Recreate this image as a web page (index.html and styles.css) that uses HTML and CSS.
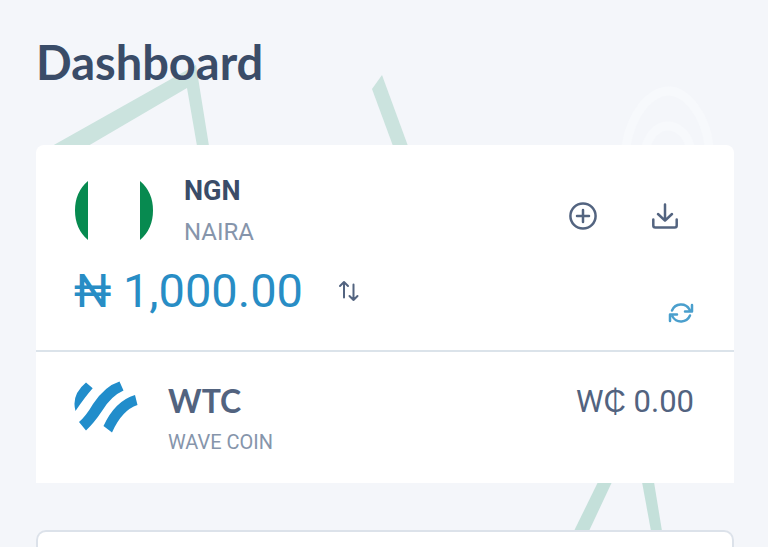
FILE: index.html
```html
<!DOCTYPE html>
<html lang="en">
<head>
<meta charset="utf-8">
<meta name="viewport" content="width=device-width, initial-scale=1">
<title>Dashboard</title>
<link rel="stylesheet" href="styles.css">
</head>
<body>
<svg class="backdrop" width="768" height="547" viewBox="0 0 768 547" aria-hidden="true">
  <path class="ribbon" d="M52 146 196 65 209 146H197L187 88 88 146Z"/>
  <path class="ribbon" d="M372 89 382 75 408 146H393Z"/>
  <path class="ribbon ribbon-low" d="M598 482H612L589 531H574Z"/>
  <path class="ribbon ribbon-low" d="M642 482H654L662 531H651Z"/>
  <path class="wave" d="M626 146C632 112 650 92 668 91S706 116 709 146M646 146C652 130 660 126 668 126S686 132 690 146"/>
</svg>
<main class="page">
  <h1 class="title">Dashboard</h1>
  <section class="wallets">
    <article class="wallet">
      <div class="row">
        <svg class="flag" width="80" height="60" viewBox="0 0 80 60" role="img" aria-label="Nigeria">
          <path fill="#078a50" d="M14 0V59Q1 48 1 29.500T14 0ZM66 0V59Q79 48 79 29.500T66 0Z"/>
        </svg>
        <div class="names">
          <h2 class="code">NGN</h2>
          <p class="name">NAIRA</p>
        </div>
        <div class="actions">
          <button class="icon-button" type="button" aria-label="Add money">
            <svg width="28" height="28" viewBox="0 0 28 28"><circle cx="14" cy="14" r="12.6"/><path d="M14 8v12M8 14h12"/></svg>
          </button>
          <button class="icon-button" type="button" aria-label="Withdraw">
            <svg width="28" height="28" viewBox="0 0 28 28"><path d="M14 2.500v16M7 12l7 6.700 7-6.700M2.300 17.500v6a2 2 0 0 0 2 2h19.400a2 2 0 0 0 2-2v-6"/></svg>
          </button>
        </div>
      </div>
      <div class="row balance-row">
        <p class="balance">₦ 1,000.00</p>
        <button class="icon-button swap" type="button" aria-label="Swap">
          <svg width="22" height="22" viewBox="0 0 22 22"><path d="M6 17.500V2M2 6 6 2 10 6M15.500 4.500V20M11.500 16 15.500 20l4-4"/></svg>
        </button>
        <button class="icon-button refresh" type="button" aria-label="Refresh balance">
          <svg width="26" height="24" viewBox="0 0 26 24"><path d="M4 9.500A9.800 9.800 0 0 1 21.500 8.500M24 4v6.500h-7M22 14.500A9.800 9.800 0 0 1 4.500 15.500M2 20v-6.500h7"/></svg>
        </button>
      </div>
    </article>
    <article class="wallet wallet-coin row">
      <svg class="coin" width="64" height="54" viewBox="0 0 64 54" role="img" aria-label="Wave Coin">
        <path fill="#218dcb" d="M12 2.500 18.700 8.300Q11 17 1.500 31Q-3 15 12 2.500ZM45.500 1.500 49.500 10.500Q37 16 28 31 20 43 12 50.500L5 42Q12 36 19 24 31 6 45.500 1.500ZM61 15 63.500 25Q48 30 38 52.500L29.500 46Q41 21 61 15Z"/>
      </svg>
      <div class="names">
        <h2 class="code coin-code">WTC</h2>
        <p class="name coin-name">WAVE COIN</p>
      </div>
      <p class="coin-balance">W₵ 0.00</p>
    </article>
  </section>
  <section class="panel" aria-label="Activity"></section>
</main>
</body>
</html>
```
FILE: styles.css
```css
* {
  box-sizing: border-box;
}

body {
  position: relative;
  min-height: 100vh;
  margin: 0;
  overflow-x: hidden;
  background: #f4f6fa;
  color: #52637f;
  font-family: Roboto, sans-serif;
}

h1, h2, p {
  margin: 0;
}

.backdrop {
  position: absolute;
  top: 0;
  left: 0;
  z-index: -1;
}

.ribbon {
  fill: #cbe3de;
}

.ribbon-low {
  fill: #c4e0da;
}

.wave {
  fill: none;
  stroke: #f7f9fc;
  stroke-width: 9;
}

.page {
  display: flex;
  flex-direction: column;
  min-height: 100vh;
  padding: 32px 34px 0 36px;
}

.title {
  margin-bottom: 53px;
  color: #3a4c68;
  font: 700 47px/60px Lato, sans-serif;
}

.wallets {
  border-radius: 8px 8px 0 0;
  background: #fff;
}

.wallet {
  padding: 26px 40px 21px 38px;
}

.row {
  display: flex;
  align-items: flex-start;
}

.flag {
  margin-top: 10px;
}

.names {
  margin-left: 30px;
}

.code {
  color: #3a4c68;
  font-size: 27px;
  line-height: 41px;
}

.name {
  color: #8695ab;
  font-size: 24px;
  line-height: 41px;
}

.actions {
  display: flex;
  gap: 54px;
  margin: 31px 15px 0 auto;
}

.icon-button {
  display: flex;
  padding: 0;
  border: 0;
  background: none;
  color: #536480;
  cursor: pointer;
}

.icon-button svg {
  fill: none;
  stroke: currentColor;
  stroke-width: 2.5;
  stroke-linecap: round;
  stroke-linejoin: round;
}

.balance-row {
  align-items: center;
}

.balance {
  color: #288dc5;
  font-size: 47px;
  line-height: 76px;
}

.swap {
  margin-left: 35px;
}

.icon-button.swap svg {
  stroke-width: 2;
}

.refresh {
  align-self: flex-end;
  margin: 0 0 4px auto;
  color: #4a9fcd;
}

.wallet-coin {
  padding: 28px 40px 19px 38px;
  border-top: 2px solid #dbe3ea;
}

.coin-code {
  color: #52637f;
  font: 700 32px/41px Lato, sans-serif;
}

.coin-name {
  font-size: 20px;
  line-height: 43px;
}

.coin-balance {
  margin-left: auto;
  font-size: 31px;
  line-height: 43px;
}

.panel {
  flex: 1;
  margin-top: 47px;
  border: 2px solid #dce2ea;
  border-bottom: 0;
  border-radius: 10px 10px 0 0;
  background: #fff;
}
```
